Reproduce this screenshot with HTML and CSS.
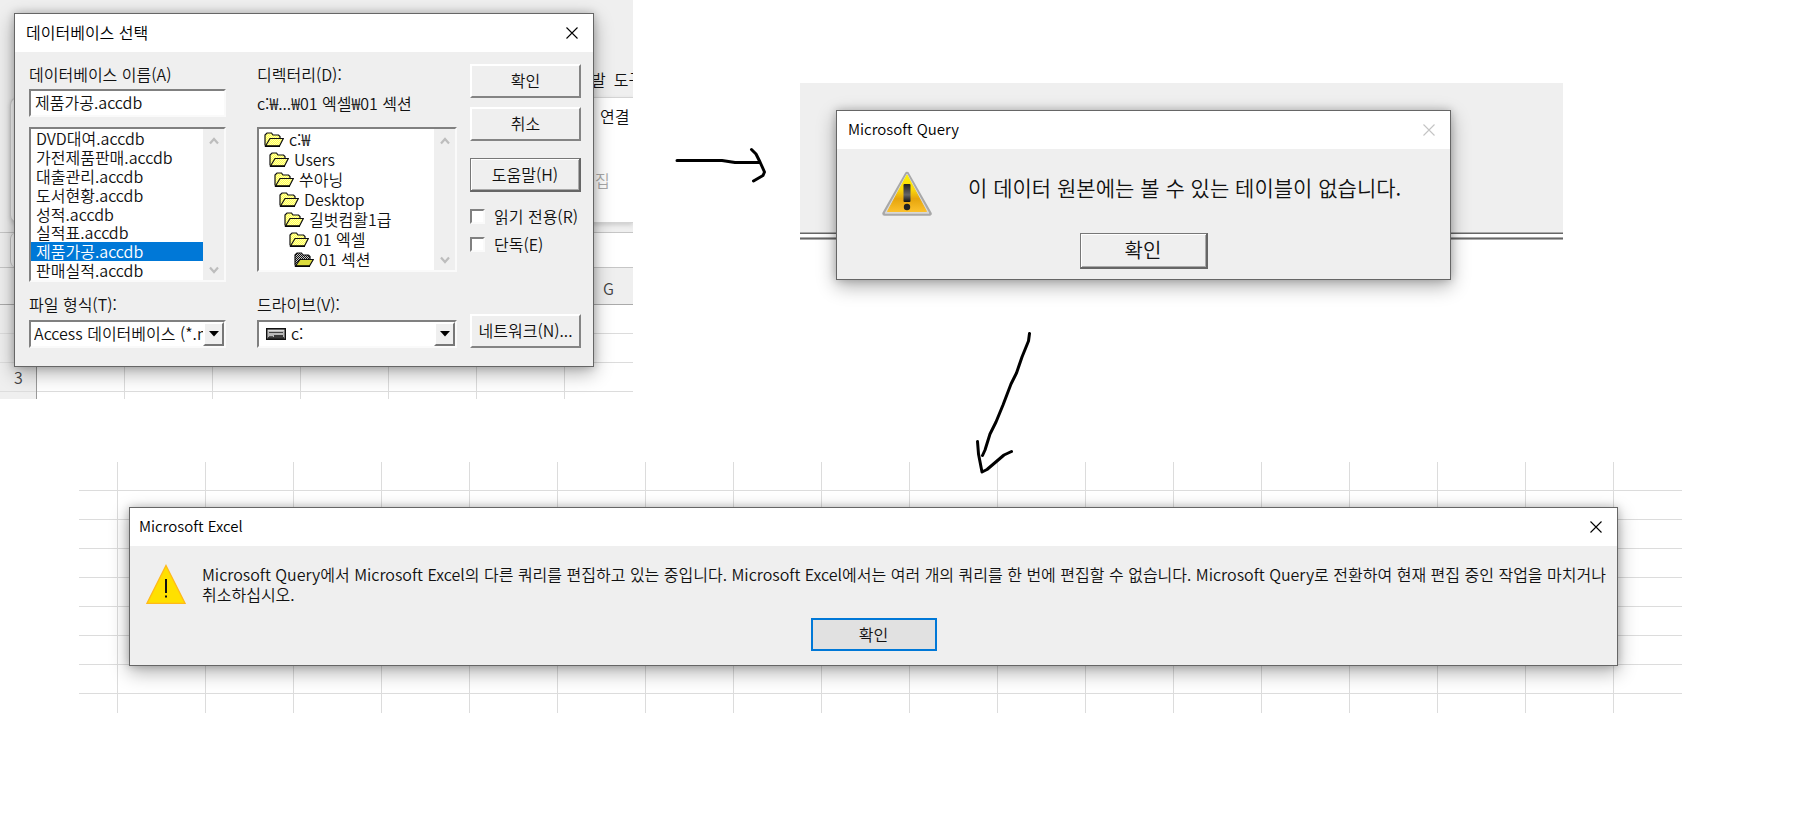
FILE: index.html
```html
<!DOCTYPE html>
<html lang="ko">
<head>
<meta charset="utf-8">
<title>데이터베이스 선택</title>
<link rel="stylesheet" href="styles.css">
</head>
<body>
<svg class="defs" width="0" height="0" aria-hidden="true">
  <defs>
    <pattern id="dots" width="2" height="2" patternUnits="userSpaceOnUse"><rect width="2" height="2" fill="#ffff4d"/><rect width="1" height="1" fill="#ffffb0"/><rect x="1" y="1" width="1" height="1" fill="#ffffb0"/></pattern>
    <pattern id="mesh" width="2" height="2" patternUnits="userSpaceOnUse"><rect width="2" height="2" fill="#c8c8c8"/><rect width="1" height="1" fill="#111"/><rect x="1" y="1" width="1" height="1" fill="#111"/></pattern>
    <linearGradient id="amber" x1="0" y1="0" x2="0" y2="1"><stop offset="0" stop-color="#fff200"/><stop offset=".4" stop-color="#fbd80a"/><stop offset=".65" stop-color="#e6a50c"/><stop offset="1" stop-color="#fbc02c"/></linearGradient>
    <linearGradient id="mark" x1="0" y1="0" x2="0" y2="1"><stop offset="0" stop-color="#222"/><stop offset=".6" stop-color="#666"/><stop offset="1" stop-color="#111"/></linearGradient>
    <symbol id="folder" viewBox="0 0 20 15"><path d="M1 13.500V3L3 1H7.500L9 3H14.500L16 4.500V7" fill="url(#dots)" stroke="#111" stroke-width="1.200"/><path d="M1.500 14L6 6.500H19.300L15.500 14Z" fill="url(#dots)" stroke="#111" stroke-width="1.200"/><path d="M1 14.200H16" stroke="#000" stroke-width="1.500"/></symbol>
    <symbol id="folder-dark" viewBox="0 0 20 15"><path d="M1 13.500V3L3 1H7.500L9 3H14.500L16 4.500V7" fill="url(#mesh)" stroke="#111" stroke-width="1.200"/><path d="M1.500 14L6 7.500H19.300L15.500 14Z" fill="#dcdc3c" stroke="#111" stroke-width="1.200"/><path d="M1 14.200H16" stroke="#000" stroke-width="1.500"/></symbol>
    <symbol id="cross" viewBox="0 0 12 12"><path d="M.5 .5L11.500 11.500M11.500 .5L.5 11.500" fill="none" stroke="currentColor" stroke-width="1.100"/></symbol>
    <symbol id="up" viewBox="0 0 10 8"><path d="M1 6.500L5 2L9 6.500" fill="none" stroke="#bdbdbd" stroke-width="2.200"/></symbol>
    <symbol id="down" viewBox="0 0 10 8"><path d="M1 1.500L5 6L9 1.500" fill="none" stroke="#bdbdbd" stroke-width="2.200"/></symbol>
  </defs>
</svg>
<main class="canvas">
  <section class="workbook">
    <div class="tabs"><span>발</span><span>도구</span></div>
    <div class="ribbon"><div class="ribbon-panel"><span>연결</span><span class="muted">집</span></div></div>
    <div class="formula"><div class="formula-box"></div></div>
    <div class="columns"><span>G</span></div>
    <div class="cells"><div class="row-heads"><span>3</span></div><div class="cell-area"></div></div>
  </section>

  <section class="dialog picker" role="dialog" aria-labelledby="picker-title">
    <header class="titlebar"><h2 id="picker-title">데이터베이스 선택</h2><button class="close" aria-label="닫기"><svg width="12" height="12"><use href="#cross"/></svg></button></header>
    <div class="picker-body">
      <div class="col files">
        <label for="db-name">데이터베이스 이름(A)</label>
        <input class="sunken name" id="db-name" type="text" value="제품가공.accdb">
        <div class="sunken list">
          <ul class="file-list" role="listbox" aria-label="데이터베이스">
            <li role="option">DVD대여.accdb</li>
            <li role="option">가전제품판매.accdb</li>
            <li role="option">대출관리.accdb</li>
            <li role="option">도서현황.accdb</li>
            <li role="option">성적.accdb</li>
            <li role="option">실적표.accdb</li>
            <li role="option" class="selected" aria-selected="true">제품가공.accdb</li>
            <li role="option">판매실적.accdb</li>
          </ul>
          <div class="scroll"><svg width="10" height="8"><use href="#up"/></svg><svg width="10" height="8"><use href="#down"/></svg></div>
        </div>
        <label class="foot-label" for="file-type">파일 형식(T):</label>
        <div class="sunken combo"><select id="file-type"><option>Access 데이터베이스 (*.mdb)</option></select><span class="arrow"><svg width="10" height="6"><path d="M0 0H10L5 5.500Z"/></svg></span></div>
      </div>
      <div class="col dirs">
        <span class="line">디렉터리(D):</span>
        <span class="line path">c:₩...₩01 엑셀₩01 섹션</span>
        <div class="sunken list">
          <ul class="tree" role="tree" aria-label="디렉터리">
            <li role="treeitem"><svg width="20" height="15"><use href="#folder"/></svg>c:₩</li>
            <li role="treeitem" class="d1"><svg width="20" height="15"><use href="#folder"/></svg>Users</li>
            <li role="treeitem" class="d2"><svg width="20" height="15"><use href="#folder"/></svg>쑤아닝</li>
            <li role="treeitem" class="d3"><svg width="20" height="15"><use href="#folder"/></svg>Desktop</li>
            <li role="treeitem" class="d4"><svg width="20" height="15"><use href="#folder"/></svg>길벗컴활1급</li>
            <li role="treeitem" class="d5"><svg width="20" height="15"><use href="#folder"/></svg>01 엑셀</li>
            <li role="treeitem" class="d6"><svg width="20" height="15"><use href="#folder-dark"/></svg>01 섹션</li>
          </ul>
          <div class="scroll"><svg width="10" height="8"><use href="#up"/></svg><svg width="10" height="8"><use href="#down"/></svg></div>
        </div>
        <label class="foot-label" for="drive">드라이브(V):</label>
        <div class="sunken combo drive"><select id="drive"><option>c:</option></select><svg class="disk" width="20" height="12" viewBox="0 0 20 12"><path d="M.7 .7H19.300V11.300H.7Z" fill="#b8b8b8" stroke="#111" stroke-width="1.400"/><path d="M2 2.500H18" stroke="#ddd"/><path d="M3 4.500H17" stroke="#444"/><path d="M3 8.500H7" stroke="#555"/><path d="M8 8H17M2 10H18" stroke="#111" stroke-width="1.400"/></svg><span class="arrow"><svg width="10" height="6"><path d="M0 0H10L5 5.500Z"/></svg></span></div>
      </div>
      <div class="col actions">
        <button class="raised">확인</button>
        <button class="raised">취소</button>
        <button class="raised default help">도움말(H)</button>
        <label class="check"><input type="checkbox">읽기 전용(R)</label>
        <label class="check"><input type="checkbox">단독(E)</label>
        <button class="raised network">네트워크(N)...</button>
      </div>
    </div>
  </section>

  <section class="query-window">
    <div class="dialog query" role="alertdialog" aria-labelledby="query-title">
      <header class="titlebar latin"><h2 id="query-title">Microsoft Query</h2><button class="close off" disabled aria-label="닫기"><svg width="12" height="12"><use href="#cross"/></svg></button></header>
      <div class="query-body">
        <svg width="50" height="46" viewBox="0 0 50 46"><path d="M25 3L47.500 42.500H2.500Z" fill="#aaa" stroke="#a8a8a8" stroke-width="4.500" stroke-linejoin="round"/><path d="M25 3.500L46.500 42H3.500Z" fill="#d8d8d8" stroke="#d8d8d8" stroke-width="1.500" stroke-linejoin="round"/><path d="M25 4L44.500 40.500H5.500Z" fill="url(#amber)" stroke="url(#amber)" stroke-linejoin="round"/><rect x="21.500" y="13" width="7" height="18" rx="1" fill="url(#mark)"/><circle cx="25" cy="36" r="3.200" fill="#222"/></svg>
        <p>이 데이터 원본에는 볼 수 있는 테이블이 없습니다.</p>
      </div>
      <button class="raised default">확인</button>
    </div>
  </section>

  <section class="sheet">
    <div class="dialog excel" role="alertdialog" aria-labelledby="excel-title">
      <header class="titlebar latin"><h2 id="excel-title">Microsoft Excel</h2><button class="close" aria-label="닫기"><svg width="12" height="12"><use href="#cross"/></svg></button></header>
      <div class="excel-body">
        <svg width="40" height="40" viewBox="0 0 40 40"><path d="M20 1.500L39 39.300H1Z" fill="#ffe000" stroke="#ffb91a" stroke-width="1.300"/><path d="M20 15V29M20 31.500V33.500" stroke="#111" stroke-width="2"/></svg>
        <p>Microsoft Query에서 Microsoft Excel의 다른 쿼리를 편집하고 있는 중입니다. Microsoft Excel에서는 여러 개의 쿼리를 한 번에 편집할 수 없습니다. Microsoft Query로 전환하여 현재 편집 중인 작업을 마치거나 취소하십시오.</p>
      </div>
      <button class="flat">확인</button>
    </div>
  </section>

  <svg class="stroke stroke-right" width="94" height="38" viewBox="674 146 94 38"><path d="M677 160.500H722L735 162.500H760M751.500 149.500L756 154L760 162L764.500 172L763 175.500L753.500 181"/></svg>
  <svg class="stroke stroke-down" width="60" height="146" viewBox="974 330 60 146"><path d="M1029.500 333.500L1028.500 341L1022 357L1016.500 373L1011 384L1003 405L996 422L990 434L985 450L982.500 455.500M977.500 441.500L978.500 454L982 472L987 469.500L1004 455L1011.500 451.500"/></svg>
</main>
</body>
</html>
```

FILE: styles.css
```css
* { box-sizing: border-box; }
body {
  margin: 0;
  background: #fff;
  color: #111;
  font: 350 16px/20px "Noto Sans CJK KR", "Noto Sans", sans-serif;
}
h2, p, ul { margin: 0; padding: 0; font: inherit; }
ul { list-style: none; }
button, input, select { font: inherit; color: inherit; border-radius: 0; }
.defs { position: absolute; }
.canvas { position: relative; min-height: 100vh; min-width: 1500px; overflow: hidden; }

/* workbook behind the database picker */
.workbook {
  width: 633px;
  display: flex;
  flex-direction: column;
  overflow: hidden;
  background: #efefef;
}
.tabs { height: 97px; display: flex; gap: 8px; padding: 69px 0 0 591px; white-space: nowrap; }
.ribbon { height: 136px; padding-left: 10px; border-bottom: 1px solid #c6c6c6; }
.ribbon-panel {
  height: 126px;
  display: flex;
  flex-direction: column;
  gap: 44px;
  padding: 8px 0 0 584px;
  background: #fff;
  border: 1px solid #d4d4d4;
  border-right: 0;
  border-radius: 8px 0 0 8px;
  box-shadow: 0 2px 4px #ccc;
}
.ribbon-panel span:first-child { padding-left: 5px; }
.muted { color: #aaa; }
.formula { height: 34px; padding-left: 10px; }
.formula-box { height: 34px; background: #fff; border-left: 1px solid #c6c6c6; border-radius: 6px 0 0 6px; }
.columns { height: 38px; padding: 10px 0 0 603px; color: #444; border-top: 1px solid #c6c6c6; border-bottom: 1px solid #aaa; }
.cells { height: 94px; display: flex; }
.row-heads {
  width: 37px;
  padding: 62px 0 0 14px;
  color: #444;
  border-right: 1px solid #999;
  background: repeating-linear-gradient(#efefef 0 28px, #ddd 28px 29px);
}
.cell-area {
  flex: 1;
  background: repeating-linear-gradient(90deg, transparent 0 87px, #dcdcdc 87px 88px), repeating-linear-gradient(#fff 0 28px, #dcdcdc 28px 29px);
}

/* dialogs */
.dialog {
  position: absolute;
  background: #efefef;
  border: 1px solid #666;
  box-shadow: 0 6px 18px rgba(0, 0, 0, .32), 0 0 8px rgba(0, 0, 0, .2);
}
.titlebar {
  height: 38px;
  display: flex;
  align-items: center;
  justify-content: space-between;
  padding: 0 15px 0 11px;
  background: #fff;
  color: #000;
}
.titlebar h2 { padding-bottom: 2px; }
.latin { font-size: 15px; }
.close { display: flex; padding: 0; border: 0; background: none; }
.off { color: #c4c4c4; }

.raised {
  height: 34px;
  padding: 0 0 2px;
  background: #efefef;
  border: 2px solid;
  border-color: #fff #848484 #848484 #fff;
}
.default { border-color: #777 #666 #666 #777; border-width: 1px 2px 2px 1px; box-shadow: inset 1px 1px #fff, inset -1px -1px #aaa; }
.sunken {
  background: #fff;
  border: 2px solid;
  border-color: #808080 #fafafa #fafafa #808080;
}

/* database picker */
.picker { left: 14px; top: 13px; width: 580px; }
.picker-body { display: flex; padding: 12px 12px 18px 14px; }
.col { display: flex; flex-direction: column; }
.col > label, .line { line-height: 20px; padding-bottom: 2px; white-space: nowrap; }
.files { width: 197px; margin-right: 31px; }
.dirs { width: 200px; margin-right: 13px; }
.actions { flex: 1; }
.name { width: 100%; height: 28px; margin: 3px 0 10px; padding: 0 4px 2px; outline: 0; }
.path { margin: 7px 0 12px; }
.list { display: flex; }
.list ul { flex: 1; min-width: 0; }
.files .list { height: 155px; }
.dirs .list { height: 145px; }
.file-list { display: grid; grid-template-rows: repeat(8, 1fr); }
.file-list li { padding-left: 5px; line-height: 18px; white-space: nowrap; }
.selected { background: #0078d7; color: #fff; }
.scroll {
  width: 21px;
  display: flex;
  flex-direction: column;
  align-items: center;
  justify-content: space-between;
  padding: 8px 0 6px;
  background: #efefef;
}
.tree li { display: flex; align-items: center; gap: 5px; padding-left: 5px; line-height: 20px; white-space: nowrap; }
.tree .d1 { padding-left: 10px; }
.tree .d2 { padding-left: 15px; }
.tree .d3 { padding-left: 20px; }
.tree .d4 { padding-left: 25px; }
.tree .d5 { padding-left: 30px; }
.tree .d6 { padding-left: 35px; }
.foot-label { margin: 12px 0 4px; }
.dirs .foot-label { margin-top: 22px; }
.combo { height: 28px; display: grid; grid-template: 24px / minmax(0, 1fr); align-items: center; }
.combo > * { grid-area: 1 / 1; }
.combo select { width: 100%; height: 24px; padding: 0 19px 2px 3px; border: 0; background: #fff; appearance: none; outline: 0; text-overflow: clip; }
.combo.drive select { padding-left: 32px; }
.disk { margin-left: 7px; }
.arrow {
  justify-self: end;
  width: 21px;
  height: 24px;
  display: flex;
  align-items: center;
  justify-content: center;
  background: #efefef;
  border: 2px solid;
  border-color: #fff #777 #777 #fff;
  pointer-events: none;
}
.actions .raised { margin-bottom: 9px; }
.actions .help { margin: 8px 0 14px; }
.actions .check { display: flex; align-items: center; gap: 9px; padding: 0; margin-bottom: 8px; }
.check input { appearance: none; width: 15px; height: 15px; margin: 0; background: #fff; border: 2px solid; border-color: #808080 #fafafa #fafafa #808080; }
.actions .network { margin: auto 0 0; }

/* Query message */
.query-window {
  position: absolute;
  left: 800px;
  right: 241px;
  top: 83px;
  height: 157px;
  background: linear-gradient(#efefef 149px, #aaa 149px 150px, #666 150px 151px, #fff 151px 154px, #aaa 154px 155px, #666 155px 156px, #aaa 156px);
}
.query { left: 36px; right: 112px; top: 27px; }
.query, .excel { display: flex; flex-direction: column; }
.query-body { display: flex; padding: 22px 0 16px 45px; gap: 36px; }
.query-body p { padding-top: 2px; font-size: 21px; line-height: 28px; white-space: nowrap; }
.query .raised { align-self: center; width: 128px; height: 36px; margin-bottom: 10px; font-size: 20px; }

/* Excel message */
.sheet {
  position: absolute;
  left: 79px;
  right: 122px;
  top: 462px;
  height: 251px;
  background: repeating-linear-gradient(90deg, transparent 0 87px, #dcdcdc 87px 88px) -49px 0 / calc(100% + 49px) 100%, repeating-linear-gradient(#fff 0 28px, #dcdcdc 28px 29px);
}
.excel { left: 50px; right: 64px; top: 45px; }
.excel .titlebar { padding-left: 9px; }
.excel-body { display: flex; gap: 16px; padding: 18px 6px 14px 16px; }
.excel-body svg { flex: none; }
.excel-body p { word-break: keep-all; }
.flat { align-self: center; width: 126px; height: 33px; margin-bottom: 14px; padding: 0 0 2px; background: #e1e1e1; border: 2px solid #0078d7; }

/* hand-drawn arrows */
.stroke { position: absolute; fill: none; stroke: #000; stroke-width: 3; stroke-linecap: round; stroke-linejoin: round; }
.stroke-right { left: 674px; top: 146px; }
.stroke-down { left: 974px; top: 330px; }
```
